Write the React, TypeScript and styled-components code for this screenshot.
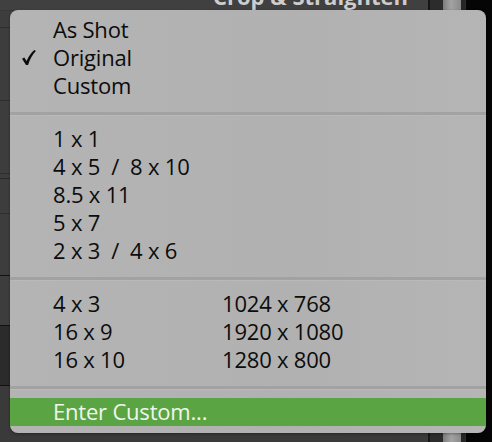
import React from 'react';
import styled, { createGlobalStyle } from 'styled-components';

const GlobalStyle = createGlobalStyle`
  html, body {
    margin: 0;
    padding: 0;
    background: #3b3b3b;
  }
`;

interface RowType {
  h: number;
  line?: string;
  bg?: string;
}

interface ItemType {
  text: string;
  second?: string;
  checked?: boolean;
}

const Screen = styled.div`
  position: relative;
  width: 492px;
  height: 442px;
  overflow: hidden;
  display: flex;
  flex-direction: row;
  background: #3b3b3b;
  font-family: 'Open Sans', 'Liberation Sans', sans-serif;
`;

const MainPane = styled.div`
  flex: 1;
  display: flex;
  flex-direction: column;
  min-width: 0;
`;

const PanelTitle = styled.div`
  height: 10px;
  overflow: hidden;
  display: flex;
  justify-content: flex-end;
  padding-right: 20px;
  background: #404040;
  border-bottom: 1px solid #363636;
`;

const TitleText = styled.span`
  margin-top: -18px;
  font-size: 22px;
  line-height: 28px;
  font-weight: 700;
  color: #cdcdcd;
  white-space: nowrap;
`;

const PanelRow = styled.div<RowType>`
  height: ${p => p.h}px;
  flex-shrink: 0;
  background: ${p => p.bg || '#3d3d3d'};
  border-bottom: 1px solid ${p => p.line || '#2e2e2e'};
`;

const PanelFill = styled.div`
  flex: 1;
  background: #3a3a3a;
`;

const Divider = styled.div`
  width: 2px;
  background: #161616;
`;

const ScrollTrack = styled.div`
  width: 36px;
  display: flex;
  flex-direction: row;
  padding-left: 13px;
  background: #2c2c2c;
  box-sizing: border-box;
`;

const ScrollThumb = styled.div`
  width: 18px;
  background: linear-gradient(to right, #7d7d7d, #a3a3a3 45%, #8a8a8a);
`;

const ScrollEdge = styled.div`
  width: 4px;
  background: #262626;
`;

const Outside = styled.div`
  width: 26px;
  background: #050505;
`;

const Menu = styled.div`
  position: absolute;
  left: 10px;
  top: 10px;
  width: 476px;
  box-sizing: border-box;
  padding: 5px 0 7px;
  background: linear-gradient(to right, #b4b4b4, #b1b1b1 60%, #b5b5b5);
  border-radius: 8px;
  box-shadow: 0 1px 3px rgba(0, 0, 0, 0.35);
  color: #0c0c0c;
`;

const Section = styled.div`
  display: flex;
  flex-direction: column;
`;

const Grid = styled.div`
  display: grid;
  grid-template-columns: 212px 1fr;
`;

const Item = styled.div`
  position: relative;
  height: 28px;
  padding-left: 43px;
  font-size: 22px;
  line-height: 28px;
  white-space: pre;
  letter-spacing: -0.2px;
`;

const Cell = styled.div`
  height: 28px;
  font-size: 22px;
  line-height: 28px;
  white-space: pre;
  letter-spacing: -0.2px;
  &:nth-child(odd) {
    padding-left: 43px;
  }
`;

const Check = styled.svg`
  position: absolute;
  left: 12px;
  top: 7px;
  width: 14px;
  height: 15px;
`;

const Separator = styled.div`
  margin: 13px 0 8px;
  height: 3px;
  background: #a2a2a2;
  border-bottom: 1px solid #b9b9b9;
`;

const Highlight = styled.div`
  height: 28px;
  padding-left: 43px;
  background: #5ba443;
  color: #f1f5ee;
  font-size: 22px;
  line-height: 26px;
  letter-spacing: -0.2px;
`;

const firstItems: ItemType[] = [
  { text: 'As Shot' },
  { text: 'Original', checked: true },
  { text: 'Custom' },
];

const ratioItems: ItemType[] = [
  { text: '1 x 1' },
  { text: '4 x 5  /  8 x 10' },
  { text: '8.5 x 11' },
  { text: '5 x 7' },
  { text: '2 x 3  /  4 x 6' },
];

const screenItems: ItemType[] = [
  { text: '4 x 3', second: '1024 x 768' },
  { text: '16 x 9', second: '1920 x 1080' },
  { text: '16 x 10', second: '1280 x 800' },
];

const rows: RowType[] = [
  { h: 16 },
  { h: 72 },
  { h: 72 },
  { h: 4, line: '#2a2a2a' },
  { h: 34 },
  { h: 61, line: '#111' },
  { h: 49, line: '#111' },
  { h: 59, line: '#111', bg: '#2b2b2b' },
];

const App = () => {
  return (
    <Screen>
      <GlobalStyle />
      <MainPane>
        <PanelTitle>
          <TitleText>Crop &amp; Straighten</TitleText>
        </PanelTitle>
        {rows.map((r, i) => (
          <PanelRow key={i} h={r.h} line={r.line} bg={r.bg} />
        ))}
        <PanelFill />
      </MainPane>
      <Divider />
      <ScrollTrack>
        <ScrollThumb />
        <ScrollEdge />
      </ScrollTrack>
      <Outside />

      <Menu>
        <Section>
          {firstItems.map(item => (
            <Item key={item.text}>
              {item.checked && (
                <Check viewBox="0 0 13 14">
                  <path
                    d="M0 8.1 L2.1 6.9 L4.3 10.2 C6 6.2 8.4 2.8 11.5 0 L12.9 1 C9.9 4.1 7.4 8.4 5.6 14 L3.7 14 Z"
                    fill="#0c0c0c"
                  />
                </Check>
              )}
              {item.text}
            </Item>
          ))}
        </Section>
        <Separator />
        <Section>
          {ratioItems.map(item => (
            <Item key={item.text}>{item.text}</Item>
          ))}
        </Section>
        <Separator />
        <Grid>
          {screenItems.map(item => (
            <React.Fragment key={item.text}>
              <Cell>{item.text}</Cell>
              <Cell>{item.second}</Cell>
            </React.Fragment>
          ))}
        </Grid>
        <Separator />
        <Highlight>Enter Custom...</Highlight>
      </Menu>
    </Screen>
  );
}

export default App;
